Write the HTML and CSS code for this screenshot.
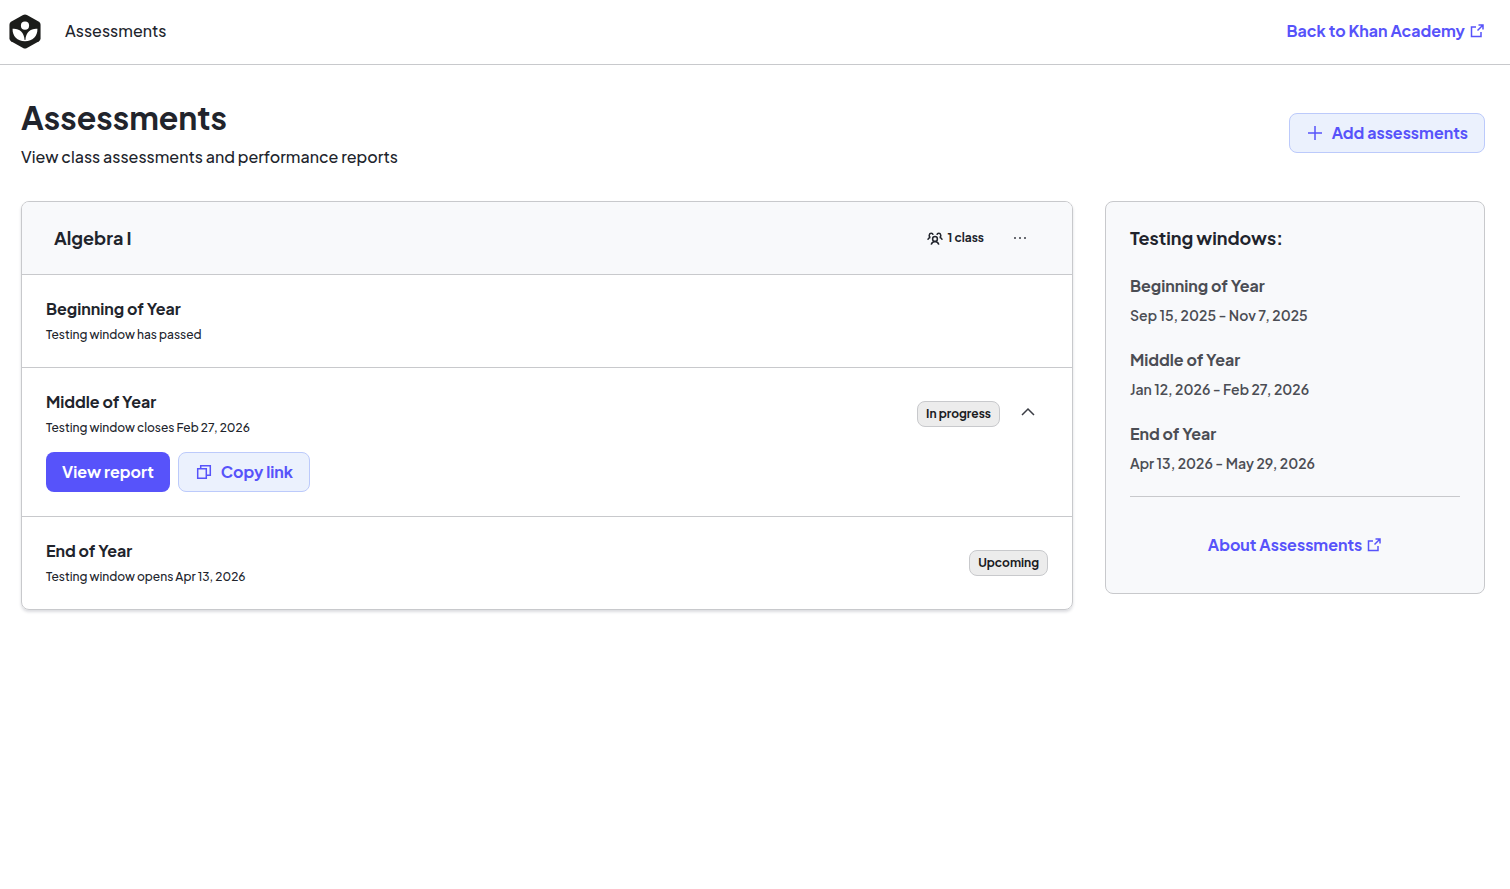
FILE: index.html
```html
<!DOCTYPE html>
<html lang="en">
<head>
    <meta charset="UTF-8">
    <meta name="viewport" content="width=device-width, initial-scale=1.0">
    <title>Assessments</title>
    <link rel="stylesheet" href="styles.css">
</head>
<body>
    <!-- top bar -->
    <header class="topbar">
        <a class="logo" href="/" aria-label="Khan Academy">
            <svg width="32" height="35" viewBox="0 0 32 36">
                <path fill="#1b1c1a" d="M14 1.1Q16 0 18 1.1L30.4 8Q32 9 32 11V25Q32 27 30.4 28L18 34.9Q16 36 14 34.9L1.6 28Q0 27 0 25V11Q0 9 1.6 8Z"/>
                <circle cx="16" cy="12" r="4.2" fill="#fff"/>
                <path fill="#fff" d="M3.2 15.2C9.6 14.6 15 18.2 15.6 26.8H16.4C17 18.2 22.4 14.6 28.8 15.2C29 22.8 24 28 16 28S3 22.8 3.2 15.2Z"/>
            </svg>
        </a>
        <span class="topbar-title">Assessments</span>
        <a class="link topbar-link" href="#">Back to Khan Academy
            <svg width="16" height="16" viewBox="0 0 16 16">
                <path d="M9.5 2H14V6.5M14 2L8.5 7.5M12 9V13.5H2.5V4H7"/>
            </svg>
        </a>
    </header>

    <main class="page">
        <div class="page-heading">
            <div>
                <h1>Assessments</h1>
                <p>View class assessments and performance reports</p>
            </div>
            <button class="btn btn-secondary" type="button">
                <svg width="18" height="18" viewBox="0 0 18 18"><path d="M9 2V16M2 9H16"/></svg>
                Add assessments
            </button>
        </div>

        <div class="columns">
            <section class="course">
                <div class="course-header">
                    <h2>Algebra I</h2>
                    <span class="class-count">
                        <svg width="16" height="16" viewBox="0 0 16 16">
                            <circle cx="8" cy="9" r="2.4"/>
                            <path d="M4.2 14.6C4.8 12.4 6 11.4 8 11.4S11.2 12.4 11.800 14.600"/>
                            <path d="M3.4 7.600C1.500 6.600 2 3.200 4.200 3.200C5.300 3.200 5.900 3.800 6.100 4.800M3.400 7.600C2.100 7.700 1.200 8.500 .7 9.800"/>
                            <path d="M12.600 7.600C14.500 6.600 14 3.200 11.800 3.200C10.700 3.200 10.100 3.800 9.900 4.800M12.600 7.600C13.900 7.700 14.800 8.500 15.300 9.800"/>
                        </svg>
                        1 class
                    </span>
                    <button class="icon-btn" type="button" aria-label="More options">
                        <svg width="16" height="16" viewBox="0 0 16 16" class="dots">
                            <circle cx="3" cy="8" r="1"/><circle cx="8" cy="8" r="1"/><circle cx="13" cy="8" r="1"/>
                        </svg>
                    </button>
                </div>

                <div class="window">
                    <div class="window-row">
                        <div class="window-info">
                            <h3>Beginning of Year</h3>
                            <p>Testing window has passed</p>
                        </div>
                    </div>
                </div>

                <div class="window">
                    <div class="window-row">
                        <div class="window-info">
                            <h3>Middle of Year</h3>
                            <p>Testing window closes Feb 27, 2026</p>
                        </div>
                        <span class="badge">In progress</span>
                        <button class="icon-btn" type="button" aria-label="Collapse">
                            <svg width="16" height="16" viewBox="0 0 16 16"><path d="M2 9L8 3L14 9"/></svg>
                        </button>
                    </div>
                    <div class="actions">
                        <button class="btn btn-primary" type="button">View report</button>
                        <button class="btn btn-secondary" type="button">
                            <svg width="18" height="18" viewBox="0 0 18 18"><path d="M2.700 5.700H11.300V15.300H2.700ZM5.700 5.700V2.700H15.300V12.300H11.300"/></svg>
                            Copy link
                        </button>
                    </div>
                </div>

                <div class="window">
                    <div class="window-row">
                        <div class="window-info">
                            <h3>End of Year</h3>
                            <p>Testing window opens Apr 13, 2026</p>
                        </div>
                        <span class="badge">Upcoming</span>
                    </div>
                </div>
            </section>

            <aside class="schedule">
                <h2>Testing windows:</h2>
                <dl>
                    <dt>Beginning of Year</dt>
                    <dd>Sep 15, 2025 - Nov 7, 2025</dd>
                    <dt>Middle of Year</dt>
                    <dd>Jan 12, 2026 - Feb 27, 2026</dd>
                    <dt>End of Year</dt>
                    <dd>Apr 13, 2026 - May 29, 2026</dd>
                </dl>
                <div class="schedule-footer">
                    <a class="link" href="#">About Assessments
                        <svg width="16" height="16" viewBox="0 0 16 16">
                            <path d="M9.5 2H14V6.5M14 2L8.5 7.5M12 9V13.5H2.5V4H7"/>
                        </svg>
                    </a>
                </div>
            </aside>
        </div>
    </main>
</body>
</html>
```
FILE: styles.css
```css
* {
    box-sizing: border-box;
}

body {
    font-family: "Plus Jakarta Sans", Inter, sans-serif;
    font-size: 16px;
    line-height: 24px;
    font-weight: 500;
    margin: 0;
    color: #21242c;
    background-color: #ffffff;
}

h1, h2, h3, p, dl, dd {
    margin: 0;
}

h2 {
    font-size: 18px;
    line-height: 24px;
    font-weight: 700;
}

svg {
    fill: none;
    stroke: currentColor;
    stroke-width: 1.5;
    flex-shrink: 0;
}

button {
    font-family: inherit;
    cursor: pointer;
}

.topbar {
    display: flex;
    align-items: center;
    height: 65px;
    padding: 0 25px 2px 9px;
    border-bottom: 1px solid #c8c9cc;
}

.logo {
    display: flex;
    margin-right: 24px;
}

.logo svg {
    stroke: none;
}

.link {
    display: inline-flex;
    align-items: center;
    gap: 4px;
    color: #5753fa;
    font-weight: 700;
    text-decoration: none;
}

.topbar-link {
    margin-left: auto;
}

.page {
    padding: 32px 25px 32px 21px;
}

.page-heading {
    display: flex;
    justify-content: space-between;
    align-items: center;
    margin-bottom: 32px;
}

.page-heading h1 {
    font-size: 32px;
    line-height: 40px;
    font-weight: 700;
    margin-bottom: 8px;
}

.btn {
    display: inline-flex;
    align-items: center;
    gap: 8px;
    height: 40px;
    padding: 0 16px;
    border: 1px solid transparent;
    border-radius: 8px;
    font-size: 16px;
    line-height: 20px;
    font-weight: 700;
}

.btn-primary {
    padding: 0 15px;
    background-color: #5753fa;
    color: #ffffff;
}

.btn-secondary {
    background-color: #ebf1fd;
    border-color: #bccafb;
    color: #5753fa;
}

.columns {
    display: grid;
    grid-template-columns: 1fr 380px;
    align-items: start;
    gap: 32px;
}

.course {
    border: 1px solid #c8c9cc;
    border-radius: 8px;
    box-shadow: 0 2px 3px rgba(33, 36, 60, 0.16);
    overflow: hidden;
}

.course-header {
    display: flex;
    align-items: center;
    height: 72px;
    padding: 0 32px;
    background-color: #f8f9fb;
}

.class-count {
    display: flex;
    align-items: center;
    gap: 4px;
    margin-left: auto;
    margin-right: 16px;
    font-size: 12px;
    font-weight: 700;
}

.icon-btn {
    display: flex;
    align-items: center;
    justify-content: center;
    width: 40px;
    height: 40px;
    padding: 0;
    border: none;
    background: none;
    color: #3b3d45;
}

.dots {
    fill: currentColor;
    stroke: none;
}

.window {
    padding: 24px;
    border-top: 1px solid #c8c9cc;
}

.window-row {
    display: flex;
    align-items: center;
}

.window-info {
    margin-right: auto;
}

.window-info h3 {
    font-size: 16px;
    line-height: 20px;
    font-weight: 700;
    margin-bottom: 8px;
}

.window-info p {
    font-size: 12px;
    line-height: 16px;
}

.badge {
    padding: 4px 8px;
    border: 1px solid #c8c9cc;
    border-radius: 8px;
    background-color: #ececec;
    color: #1b1c1f;
    font-size: 12px;
    line-height: 16px;
    font-weight: 700;
}

.badge + .icon-btn {
    margin-left: 8px;
}

.actions {
    display: flex;
    gap: 8px;
    margin-top: 16px;
}

.schedule {
    padding: 24px;
    border: 1px solid #c8c9cc;
    border-radius: 8px;
    background-color: #f8f9fb;
}

.schedule dl {
    margin-top: 24px;
    color: #4b4d54;
}

.schedule dt {
    font-weight: 700;
    margin-bottom: 8px;
}

.schedule dd {
    font-size: 14px;
    line-height: 18px;
    font-weight: 600;
    margin-bottom: 24px;
}

.schedule-footer {
    display: flex;
    justify-content: center;
    padding: 36px 0 12px;
    border-top: 1px solid #c8c9cc;
}
```
